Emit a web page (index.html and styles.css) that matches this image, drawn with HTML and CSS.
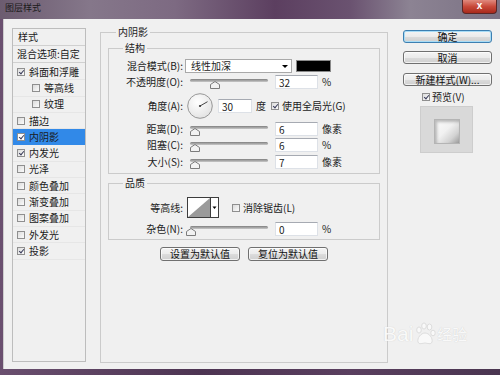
FILE: index.html
```html
<!DOCTYPE html>
<html lang="zh-CN">
<head>
  <meta charset="UTF-8" />
  <title>图层样式</title>
  <link rel="stylesheet" href="styles.css">
</head>
<body>
  <div class="window">
    <!-- Title bar -->
    <div class="titlebar">
      <span class="title">图层样式</span>
      <span class="close">x</span>
    </div>

    <div class="client">
      <!-- Style list -->
      <div class="style-list">
        <div class="list-head">样式</div>
        <div class="list-blend">混合选项:自定</div>
        <div class="list-item"><span class="cb checked"></span>斜面和浮雕</div>
        <div class="list-item sub"><span class="cb"></span>等高线</div>
        <div class="list-item sub"><span class="cb"></span>纹理</div>
        <div class="list-item"><span class="cb"></span>描边</div>
        <div class="list-item selected"><span class="cb checked"></span>内阴影</div>
        <div class="list-item"><span class="cb checked"></span>内发光</div>
        <div class="list-item"><span class="cb"></span>光泽</div>
        <div class="list-item"><span class="cb"></span>颜色叠加</div>
        <div class="list-item"><span class="cb"></span>渐变叠加</div>
        <div class="list-item"><span class="cb"></span>图案叠加</div>
        <div class="list-item"><span class="cb"></span>外发光</div>
        <div class="list-item"><span class="cb checked"></span>投影</div>
      </div>

      <!-- Inner shadow settings -->
      <fieldset class="panel">
        <legend>内阴影</legend>

        <fieldset class="group">
          <legend>结构</legend>
          <div class="row">
            <span class="lbl">混合模式(B):</span>
            <div class="select">线性加深<span class="arrow"></span></div>
            <span class="swatch"></span>
          </div>
          <div class="row">
            <span class="lbl">不透明度(O):</span>
            <div class="slider"><span class="track"></span><svg class="thumb" style="left: 32%" width="10" height="8" viewBox="0 0 10 8"><path d="M0.5 7.5 V3.5 L5 0.5 L9.5 3.5 V7.5 Z" fill="#f2f2f2" stroke="#7c7c7c"/></svg></div>
            <input class="num" type="text" value="32">
            <span class="unit">%</span>
          </div>
          <div class="row row-angle">
            <span class="lbl">角度(A):</span>
            <svg class="dial" width="26" height="26" viewBox="0 0 26 26">
              <defs>
                <radialGradient id="dialFill" cx="40%" cy="35%" r="70%">
                  <stop offset="0" stop-color="#ffffff"/>
                  <stop offset="1" stop-color="#e2e2e2"/>
                </radialGradient>
              </defs>
              <circle cx="13" cy="13" r="12.3" fill="url(#dialFill)" stroke="#8d8d8d" stroke-width="0.9"/>
              <line x1="13" y1="13" x2="20.5" y2="8.7" stroke="#444" stroke-width="1"/>
              <circle cx="13" cy="13" r="1.1" fill="#333"/>
            </svg>
            <input class="num num-angle" type="text" value="30">
            <span class="unit deg">度</span>
            <span class="cb checked cb-global"></span>
            <span class="cb-text">使用全局光(G)</span>
          </div>
          <div class="row">
            <span class="lbl">距离(D):</span>
            <div class="slider"><span class="track"></span><svg class="thumb" style="left: 6%" width="10" height="8" viewBox="0 0 10 8"><path d="M0.5 7.5 V3.5 L5 0.5 L9.5 3.5 V7.5 Z" fill="#f2f2f2" stroke="#7c7c7c"/></svg></div>
            <input class="num" type="text" value="6">
            <span class="unit">像素</span>
          </div>
          <div class="row">
            <span class="lbl">阻塞(C):</span>
            <div class="slider"><span class="track"></span><svg class="thumb" style="left: 6%" width="10" height="8" viewBox="0 0 10 8"><path d="M0.5 7.5 V3.5 L5 0.5 L9.5 3.5 V7.5 Z" fill="#f2f2f2" stroke="#7c7c7c"/></svg></div>
            <input class="num" type="text" value="6">
            <span class="unit">%</span>
          </div>
          <div class="row row-last">
            <span class="lbl">大小(S):</span>
            <div class="slider"><span class="track"></span><svg class="thumb" style="left: 7%" width="10" height="8" viewBox="0 0 10 8"><path d="M0.5 7.5 V3.5 L5 0.5 L9.5 3.5 V7.5 Z" fill="#f2f2f2" stroke="#7c7c7c"/></svg></div>
            <input class="num" type="text" value="7">
            <span class="unit">像素</span>
          </div>
        </fieldset>

        <fieldset class="group quality">
          <legend>品质</legend>
          <div class="row row-contour">
            <span class="lbl">等高线:</span>
            <svg class="contour" width="32" height="21" viewBox="0 0 32 21">
              <rect x="0.5" y="0.5" width="31" height="20" fill="#fff" stroke="#3d3d3d"/>
              <path d="M1 20 L23 1 L23 20 Z" fill="#9a9a9a"/>
              <line x1="23.5" y1="1" x2="23.5" y2="20" stroke="#3d3d3d"/>
              <path d="M25.5 9.5 H29.5 L27.5 12 Z" fill="#000"/>
            </svg>
            <span class="cb cb-anti"></span>
            <span class="cb-text">消除锯齿(L)</span>
          </div>
          <div class="row row-noise">
            <span class="lbl">杂色(N):</span>
            <div class="slider"><span class="track"></span><svg class="thumb" style="left: 1%" width="10" height="8" viewBox="0 0 10 8"><path d="M0.5 7.5 V3.5 L5 0.5 L9.5 3.5 V7.5 Z" fill="#f2f2f2" stroke="#7c7c7c"/></svg></div>
            <input class="num" type="text" value="0">
            <span class="unit">%</span>
          </div>
        </fieldset>

        <div class="defaults">
          <button class="btn btn-wide">设置为默认值</button>
          <button class="btn btn-wide">复位为默认值</button>
        </div>
      </fieldset>

      <!-- Dialog buttons -->
      <div class="side">
        <button class="btn btn-ok">确定</button>
        <button class="btn btn-cancel">取消</button>
        <button class="btn btn-new">新建样式(W)...</button>
        <div class="preview-check"><span class="cb checked"></span><span class="cb-text">预览(V)</span></div>
        <div class="preview-box"><span class="preview-swatch"></span></div>
      </div>
    </div>

    <!-- Watermark -->
    <div class="watermark">
      <span class="wm-bai">Bai</span>
      <svg width="24" height="24" viewBox="0 0 24 24">
        <g fill="#fbfbfb" stroke="#d4d4d4" stroke-width="0.8">
          <ellipse cx="6" cy="8" rx="2.3" ry="3"/>
          <ellipse cx="11" cy="4" rx="2.3" ry="3"/>
          <ellipse cx="16.5" cy="5" rx="2.3" ry="3"/>
          <ellipse cx="20" cy="11" rx="2.2" ry="2.8"/>
          <path d="M12 11 C8 11 4 16 5 20 C6 23 10 21 12 21 C14 21 18 23 19 20 C20 16 16 11 12 11 Z"/>
        </g>
      </svg>
      <span class="wm-jy">经验</span>
    </div>
  </div>
</body>
</html>
```

FILE: styles.css
```css
/* Global */
* {
  margin: 0;
  padding: 0;
  box-sizing: border-box;
}
body {
  width: 500px;
  height: 375px;
  overflow: hidden;
  font-family: "Noto Sans CJK SC", "Liberation Sans", sans-serif;
  font-size: 10px;
  line-height: 12px;
  color: #1b1b1b;
  background: linear-gradient(90deg, #6a4f6f, #4d3452 40%, #5a3f5f 70%, #4a3550);
}
.window {
  position: relative;
  width: 500px;
  height: 375px;
  display: flex;
  flex-direction: column;
}

/* Title bar */
.titlebar {
  height: 19px;
  flex: none;
  display: flex;
  justify-content: space-between;
  align-items: flex-start;
  background: linear-gradient(90deg, #6c5c70 0%, #85778a 18%, #7d6a82 35%, #5c3f60 55%, #6a5270 70%, #8c8393 82%, #7b7284 100%);
}
.title {
  padding: 2px 0 0 5px;
  font-size: 9px;
  color: #1a1a1a;
}
.close {
  width: 35px;
  height: 14px;
  margin-right: 3px;
  border: 1px solid #5a2626;
  border-top: none;
  border-radius: 0 0 4px 4px;
  background: linear-gradient(#e08a7e, #c8493a 50%, #a8291b);
  color: #fff;
  font-family: "Liberation Sans", sans-serif;
  font-weight: bold;
  font-size: 10px;
  line-height: 12px;
  text-align: center;
}

/* Client area */
.client {
  flex: 1;
  display: flex;
  align-items: flex-start;
  margin: 0 0 6px 3px;
  padding: 7px 0 0 8px;
  background: #f0f0f0;
  border-left: 1px solid #cdcdcd;
}

/* Style list */
.style-list {
  width: 74px;
  height: 334px;
  flex: none;
  margin-top: 2px;
  border: 1px solid #bdbdbd;
}
.list-head {
  height: 17px;
  padding: 2px 0 0 5px;
  border-bottom: 1px solid #d0d0d0;
}
.list-blend {
  height: 17px;
  margin-bottom: 1px;
  padding: 2px 0 0 4px;
  border-bottom: 1px solid #d0d0d0;
}
.list-item {
  height: 16.3px;
  display: flex;
  align-items: center;
  gap: 4px;
  padding-left: 4px;
  border-bottom: 1px solid #e6e6e6;
}
.list-item.sub {
  padding-left: 19px;
}
.list-item.selected {
  background: #3189e8;
  border-bottom-color: #3189e8;
}

/* Checkbox */
.cb {
  position: relative;
  width: 8px;
  height: 8px;
  flex: none;
  border: 1px solid #8f8f8f;
  background: linear-gradient(135deg, #dcdcdc, #fbfbfb);
}
.cb.checked::after {
  content: "";
  position: absolute;
  left: 2px;
  top: 0;
  width: 2px;
  height: 4px;
  border: solid #3b3d5c;
  border-width: 0 1.4px 1.4px 0;
  transform: rotate(40deg);
}
.selected .cb {
  background: #fff;
}

/* Main panel */
.panel {
  width: 288px;
  height: 337px;
  flex: none;
  margin-left: 14px;
  padding: 4px 7px 0;
  border: 1px solid #cbcbcb;
  min-width: 0;
}
.panel > legend {
  margin-left: 8px;
  padding: 0 2px;
}
.group {
  padding: 4px 0 3px;
  border: 1px solid #cbcbcb;
  min-width: 0;
}
.group > legend {
  margin-left: 14px;
  padding: 0 2px;
}
.quality {
  margin-top: 3px;
  padding: 8px 0 2px;
}

/* Rows */
.row {
  height: 16px;
  display: flex;
  align-items: center;
}
.row-angle {
  height: 30px;
  margin-top: 1px;
}
.row-last {
  margin-top: 1px;
}
.row-contour {
  height: 21px;
}
.row-noise {
  margin-top: 3px;
}
.lbl {
  width: 74px;
  flex: none;
  text-align: right;
  white-space: nowrap;
}

/* Controls */
.select {
  width: 107px;
  height: 14px;
  margin-left: 2px;
  display: flex;
  align-items: center;
  padding-left: 5px;
  background: #fff;
  border: 1px solid #a9a9a9;
}
.arrow {
  margin-left: auto;
  margin-right: 3px;
  border-left: 3px solid transparent;
  border-right: 3px solid transparent;
  border-top: 3px solid #000;
}
.swatch {
  width: 35px;
  height: 12px;
  margin-left: 4px;
  background: #000;
  border: 1px solid #8a8a8a;
}
.slider {
  position: relative;
  width: 78px;
  height: 16px;
  flex: none;
  margin-left: 7px;
}
.track {
  display: block;
  height: 3px;
  margin-top: 5px;
  border-radius: 2px;
  background: linear-gradient(#7f7f7f, #c9c9c9);
}
.thumb {
  position: absolute;
  top: 7px;
  margin-left: -5px;
}
.num {
  width: 43px;
  height: 14px;
  flex: none;
  margin-left: 7px;
  padding: 0 3px;
  font: inherit;
  line-height: 12px;
  color: #1b1b1b;
  background: #fff;
  border: 1px solid #dde1e7;
  border-top-color: #a6aab2;
  outline: none;
}
.unit {
  margin-left: 4px;
}
.dial {
  margin-left: 4px;
  flex: none;
}
.num-angle {
  width: 34px;
  margin-left: 5px;
}
.deg {
  margin-left: 4px;
}
.cb-global {
  margin-left: 5px;
}
.cb-text {
  margin-left: 3px;
  white-space: nowrap;
}
.contour {
  margin-left: 4px;
  flex: none;
}
.cb-anti {
  margin-left: 13px;
}

/* Buttons */
.btn {
  height: 14px;
  font: inherit;
  line-height: 12px;
  color: #111;
  border: 1px solid #707070;
  border-radius: 3px;
  background: linear-gradient(#f4f4f4 0%, #ebebeb 50%, #dcdcdc 51%, #cfcfcf 100%);
  box-shadow: inset 0 0 0 1px rgba(255, 255, 255, 0.7);
}
.defaults {
  display: flex;
  justify-content: center;
  gap: 8px;
  margin-top: 7px;
}
.btn-wide {
  width: 80px;
}

/* Side column */
.side {
  width: 89px;
  flex: none;
  margin: 4px 0 0 15px;
  display: flex;
  flex-direction: column;
}
.side .btn {
  width: 89px;
  height: 13px;
  line-height: 11px;
}
.btn-ok {
  border-color: #3c7fb1 !important;
  box-shadow: inset 0 0 0 1px #a8dcf6;
}
.btn-cancel {
  margin-top: 8px;
}
.btn-new {
  margin-top: 9px;
}
.preview-check {
  height: 12px;
  margin-top: 5px;
  padding-left: 19px;
  display: flex;
  align-items: center;
}
.preview-check .cb-text {
  margin-left: 2px;
}
.preview-box {
  width: 53px;
  height: 47px;
  margin: 3px 0 0 17px;
  display: flex;
  align-items: center;
  justify-content: center;
  background: #d9d9d9;
  border: 1px solid #cdcdcd;
}
.preview-swatch {
  width: 26px;
  height: 25px;
  margin-top: 4px;
  border: 1px solid #b4b4b4;
  background: linear-gradient(135deg, #fbfbfb 0%, #f1f1f1 45%, #d2d2d2 75%, #9c9c9c 100%);
  box-shadow: inset 2px 2px 3px rgba(0, 0, 0, 0.25);
}

/* Watermark */
.watermark {
  position: absolute;
  left: 383px;
  top: 322px;
  display: flex;
  align-items: center;
  opacity: 0.9;
}
.wm-bai {
  font-family: "Liberation Sans", sans-serif;
  font-size: 21px;
  line-height: 24px;
  color: #fbfbfb;
  text-shadow: 0 0 1px #c4c4c4;
}
.wm-jy {
  font-size: 15px;
  line-height: 20px;
  color: #fbfbfb;
  text-shadow: 0 0 1px #c4c4c4;
}
```
